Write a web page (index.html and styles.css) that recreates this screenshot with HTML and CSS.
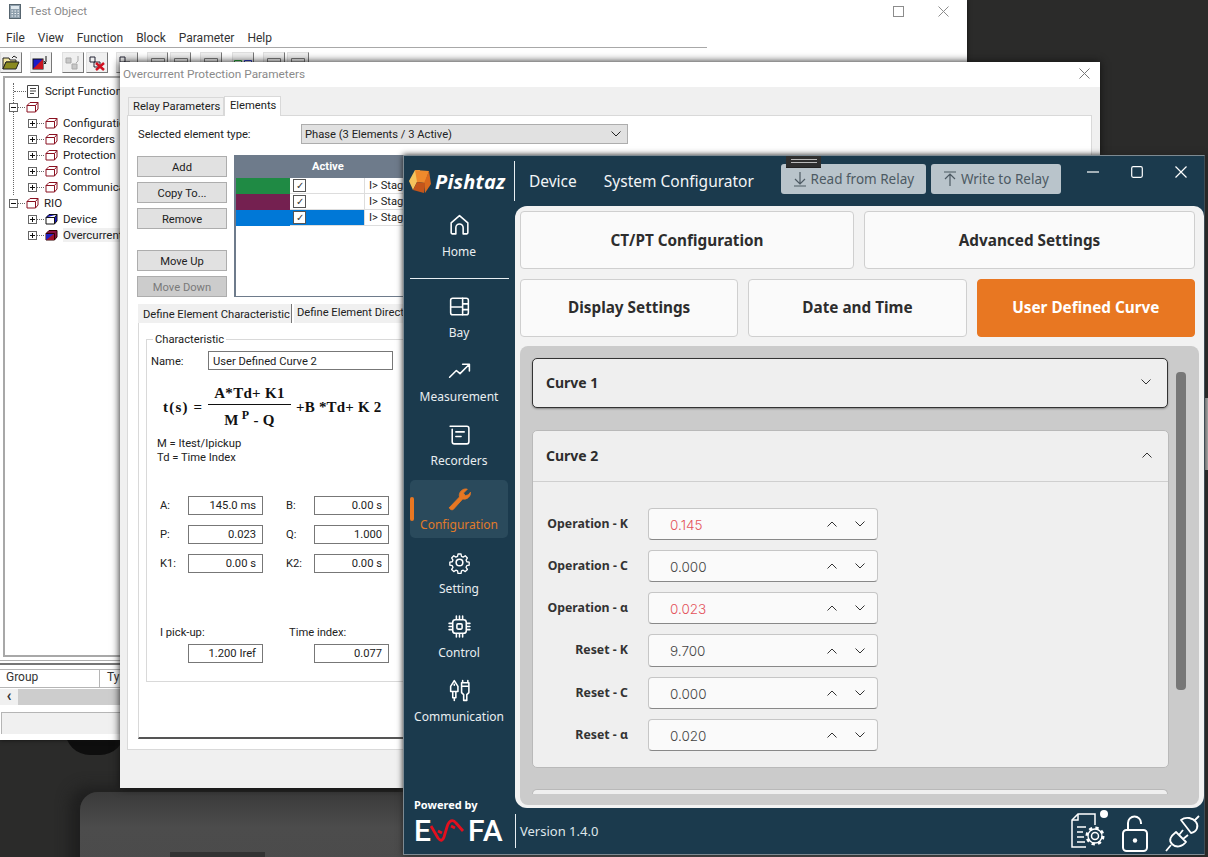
FILE: index.html
```html
<!DOCTYPE html>
<html lang="en">
<head>
<meta charset="utf-8">
<title>Pishtaz System Configurator</title>
<link rel="stylesheet" href="styles.css">
</head>
<body>
<svg class="sprite" xmlns="http://www.w3.org/2000/svg">
  <symbol id="cube" viewBox="0 0 13 12"><path d="M1 4.500h8.500v6.500H1zM1 4.500 4 1.500h8v6.500l-2.500 3M9.500 4.500 12 1.500" fill="none" stroke="#8a1020" stroke-width="1"/></symbol>
  <symbol id="cube-blue" viewBox="0 0 13 12"><path d="M1 4.500h8.500v6.500H1z" fill="#fff" stroke="#111"/><path d="M1 4.500 4 1.500h8v6.500l-2.500 3V4.500L12 1.500" fill="#1616c8" stroke="#111"/></symbol>
  <symbol id="cube-mix" viewBox="0 0 13 12"><path d="M1 4.500h8.500v6.500H1z" fill="#c81620" stroke="#300"/><path d="M1 11 9.500 4.500V11z" fill="#a01228"/><path d="M1 4.500h8.500L1 11z" fill="#2020c0"/><path d="M1 4.500 4 1.500h8v6.500l-2.500 3V4.500z" fill="#8a1040" stroke="#300"/></symbol>
  <symbol id="chev-down" viewBox="0 0 12 8"><path d="M1.500 1.500 6 6l4.500-4.500" fill="none" stroke="currentColor" stroke-width="1"/></symbol>
  <symbol id="chev-up" viewBox="0 0 12 8"><path d="M1.500 6.500 6 2l4.500 4.500" fill="none" stroke="currentColor" stroke-width="1"/></symbol>
  <symbol id="mini-box" viewBox="0 0 16 12"><path d="M1.500 1.500h13v9h-13zM1.500 5h13" fill="none" stroke="currentColor"/></symbol>
  <symbol id="pair-box" viewBox="0 0 20 12"><path d="M1.500 3.500h7v5h-7z" fill="none" stroke="#1fa030"/><path d="M11.500 3.500h7v5h-7z" fill="none" stroke="#2030c0"/></symbol>
</svg>

<div class="desktop">
  <div class="device-shape"></div>
  <div class="device-dark"></div>
  <div class="device-slot"></div>
  <div class="edge-strip"></div>

  <!-- Test Object window -->
  <section class="win win-test">
    <header class="test-title">
      <svg class="test-icon" width="12" height="15" viewBox="0 0 12 15"><rect x=".5" y=".5" width="11" height="14" fill="#8fa0ad" stroke="#56656f"/><rect x="2" y="2" width="8" height="3" fill="#dfe8ee"/><path d="M2.500 7h1.500M5.500 7H7M8.500 7H10M2.500 9.500h1.500M5.500 9.500H7M8.500 9.500H10M2.500 12h1.500M5.500 12H7M8.500 12H10" stroke="#eef3f6"/></svg>
      <span>Test Object</span>
      <span class="test-ctrls">
        <svg width="11" height="11" viewBox="0 0 11 11"><rect x=".5" y=".5" width="10" height="10" fill="none" stroke="#8c8c8c"/></svg>
        <svg width="11" height="11" viewBox="0 0 11 11"><path d="M.5.500l10 10M10.500.500l-10 10" stroke="#8c8c8c"/></svg>
      </span>
    </header>
    <nav class="test-menu"><span>File</span><span>View</span><span>Function</span><span>Block</span><span>Parameter</span><span>Help</span></nav>
    <div class="test-toolbar">
      <span class="tb"><svg width="18" height="15" viewBox="0 0 18 15"><path d="M1 3h6l1 2h6v2H4L1 14z" fill="#f2e6a0" stroke="#222"/><path d="M1 14 4 7h13l-3 7z" fill="#8a8a20" stroke="#222"/><path d="M10 3l2-2 3 2" fill="none" stroke="#222"/></svg></span>
      <span class="tb tb-m8"><svg width="18" height="15" viewBox="0 0 18 15"><rect x="1" y="4" width="10" height="10" fill="#1a1ac8" stroke="#111"/><path d="M1 14 11 4v10z" fill="#c81620"/><path d="M14 1v6l-2 2M12 6l2 3" fill="none" stroke="#111"/></svg></span>
      <span class="tb tb-m10"><svg width="18" height="15" viewBox="0 0 18 15"><path d="M2 3h5v5H2zM8 9h5v5H8z" fill="#c8c8c8" stroke="#aaa"/><path d="M14 1v5l-2 2" fill="none" stroke="#aaa"/></svg></span>
      <span class="tb tb-m2"><svg width="18" height="16" viewBox="0 0 18 16"><path d="M2 2h5v5H2zM6 7h6v5H6z" fill="none" stroke="#223"/><path d="M8 8l8 7M16 8l-8 7" stroke="#d01020" stroke-width="2.500"/></svg></span>
      <span class="tb tb-m8"><svg width="18" height="15" viewBox="0 0 18 15"><path d="M2 2h5v5H2zM6 7h6v5H6z" fill="none" stroke="#223"/></svg></span>
      <span class="tb tb-n tb-m9"><svg width="16" height="12"><use href="#mini-box"/></svg></span>
      <span class="tb tb-n tb-m2"><svg width="16" height="12"><use href="#mini-box"/></svg></span>
      <span class="tb tb-m9"><svg width="16" height="12"><use href="#mini-box"/></svg></span>
      <span class="tb tb-m10"><svg width="20" height="12"><use href="#pair-box"/></svg></span>
      <span class="tb tb-m9"><svg width="16" height="12"><use href="#mini-box"/></svg></span>
      <span class="tb tb-m2"><svg width="16" height="12"><use href="#mini-box"/></svg></span>
    </div>
    <div class="tree">
      <div class="tree-row tree-row-leaf"><span class="hdash"></span><svg class="doc" width="12" height="13" viewBox="0 0 12 13"><path d="M.5.500h11v12H.5zM3 3.500h6M3 6h6M3 8.500h4" fill="none" stroke="#444"/></svg><span class="tree-label">Script Functions</span></div>
      <div class="tree-row"><span class="expander minus"></span><span class="hdash short"></span><svg class="cube"><use href="#cube"/></svg></div>
      <div class="tree-row lvl2"><span class="expander plus"></span><span class="hdash short"></span><svg class="cube"><use href="#cube"/></svg><span class="tree-label">Configuration</span></div>
      <div class="tree-row lvl2"><span class="expander plus"></span><span class="hdash short"></span><svg class="cube"><use href="#cube"/></svg><span class="tree-label">Recorders</span></div>
      <div class="tree-row lvl2"><span class="expander plus"></span><span class="hdash short"></span><svg class="cube"><use href="#cube"/></svg><span class="tree-label">Protection</span></div>
      <div class="tree-row lvl2"><span class="expander plus"></span><span class="hdash short"></span><svg class="cube"><use href="#cube"/></svg><span class="tree-label">Control</span></div>
      <div class="tree-row lvl2"><span class="expander plus"></span><span class="hdash short"></span><svg class="cube"><use href="#cube"/></svg><span class="tree-label">Communication</span></div>
      <div class="tree-row"><span class="expander minus"></span><span class="hdash short"></span><svg class="cube"><use href="#cube"/></svg><span class="tree-label">RIO</span></div>
      <div class="tree-row lvl2"><span class="expander plus"></span><span class="hdash short"></span><svg class="cube"><use href="#cube-blue"/></svg><span class="tree-label">Device</span></div>
      <div class="tree-row lvl2"><span class="expander plus"></span><span class="hdash short"></span><svg class="cube"><use href="#cube-mix"/></svg><span class="tree-label tree-sel">Overcurrent</span></div>
    </div>
    <div class="test-split"></div>
    <div class="list-head"><span class="lh-group">Group</span><span class="lh-type">Type</span></div>
    <div class="test-scroll"><span class="scroll-arrow">‹</span><span class="scroll-thumb"></span></div>
    <div class="test-status"></div>
  </section>

  <!-- Overcurrent dialog -->
  <section class="win win-dialog">
    <header class="dlg-title"><span>Overcurrent Protection Parameters</span>
      <svg width="11" height="11" viewBox="0 0 11 11"><path d="M.5.500l10 10M10.500.500l-10 10" stroke="#777"/></svg>
    </header>
    <div class="dlg-body">
      <div class="tabs">
        <span class="tab">Relay Parameters</span><span class="tab tab-on">Elements</span>
      </div>
      <div class="dlg-panel">
        <div class="type-row">
          <span class="type-label">Selected element type:</span>
          <span class="select">Phase (3 Elements / 3 Active)<svg class="select-chev" width="12" height="8"><use href="#chev-down"/></svg></span>
        </div>
        <div class="elem-row">
          <div class="btn-col">
            <span class="btn">Add</span>
            <span class="btn">Copy To...</span>
            <span class="btn">Remove</span>
            <span class="btn btn-gap">Move Up</span>
            <span class="btn btn-off">Move Down</span>
          </div>
          <div class="elem-table">
            <div class="elem-head"><span>Active</span></div>
            <div class="elem-line"><span class="swatch sw-green"></span><span class="chk-cell"><span class="chk">✓</span></span><span class="stage">I&gt; Stage 1</span></div>
            <div class="elem-line"><span class="swatch sw-purple"></span><span class="chk-cell"><span class="chk">✓</span></span><span class="stage">I&gt; Stage 2</span></div>
            <div class="elem-line"><span class="swatch sw-blue"></span><span class="chk-cell chk-sel"><span class="chk">✓</span></span><span class="stage">I&gt; Stage 3</span></div>
          </div>
        </div>
        <div class="sub-tabs"><span class="sub-tab sub-on">Define Element Characteristic</span><span class="sub-tab">Define Element Direction</span></div>
        <div class="sub-panel">
          <div class="group">
            <span class="legend">Characteristic</span>
            <div class="name-row"><span class="name-label">Name:</span><span class="inp inp-name">User Defined Curve 2</span></div>
            <div class="formula">
              <span class="f-lhs">t(s) =</span>
              <span class="frac"><span class="f-num">A*Td+ K1</span><span class="f-den">M<sup>P</sup> - Q</span></span>
              <span class="f-rhs">+B *Td+ K 2</span>
            </div>
            <p class="legend-note">M = Itest/Ipickup<br>Td = Time Index</p>
            <div class="param-grid">
              <span>A:</span><span class="inp">145.0 ms</span><span></span><span>B:</span><span class="inp">0.00 s</span>
              <span>P:</span><span class="inp">0.023</span><span></span><span>Q:</span><span class="inp">1.000</span>
              <span>K1:</span><span class="inp">0.00 s</span><span></span><span>K2:</span><span class="inp">0.00 s</span>
            </div>
            <div class="pick-grid">
              <span class="pick-l">I pick-up:</span><span class="pick-r">Time index:</span>
              <span class="inp pick-i1">1.200 Iref</span><span class="inp pick-i2">0.077</span>
            </div>
          </div>
        </div>
      </div>
    </div>
  </section>

  <!-- Pishtaz app -->
  <section class="win win-app">
    <header class="app-head">
      <div class="brand">
        <svg width="26" height="26" viewBox="0 0 26 26"><path d="M8 2 2 13l4 9 4-8 3-12z" fill="#f5c35c"/><path d="M8 2l14 1-4 12-8-1z" fill="#ee8a2c"/><path d="M22 3l2 13-6 9-1-10z" fill="#d96a1e"/><path d="M10 14l8 1-1 10-11-3z" fill="#c4551a"/></svg>
        <span class="brand-name">Pishtaz</span>
      </div>
      <span class="head-title">Device</span>
      <span class="head-title head-title-2">System Configurator</span>
      <button class="head-btn head-btn-read"><svg width="14" height="16" viewBox="0 0 14 16"><path d="M7 1v12M2 8l5 5 5-5M1 15h12" fill="none" stroke="currentColor" stroke-width="1.200"/></svg>Read from Relay</button>
      <button class="head-btn head-btn-write"><svg width="14" height="16" viewBox="0 0 14 16"><path d="M7 15V3M2 8l5-5 5 5M1 1h12" fill="none" stroke="currentColor" stroke-width="1.200"/></svg>Write to Relay</button>
      <div class="win-ctrls">
        <svg width="12" height="12" viewBox="0 0 12 12"><path d="M0 6h12" stroke="#fff" stroke-width="1.200"/></svg>
        <svg width="12" height="12" viewBox="0 0 12 12"><rect x=".7" y=".7" width="10.600" height="10.600" rx="1.500" fill="none" stroke="#fff" stroke-width="1.200"/></svg>
        <svg width="12" height="12" viewBox="0 0 12 12"><path d="M.5.500l11 11M11.500.500l-11 11" stroke="#fff" stroke-width="1.200"/></svg>
      </div>
      <span class="snip-tag"></span>
    </header>
    <div class="app-body">
      <aside class="side">
        <nav class="side-nav">
          <a class="nav-item nav-home"><svg viewBox="0 0 24 24"><path d="M4 10.500 12 3.500l8 7V20a1 1 0 0 1-1 1h-3.500v-6a3.500 3.500 0 0 0-7 0v6H5a1 1 0 0 1-1-1z"/></svg><span>Home</span></a>
          <span class="nav-rule"></span>
          <a class="nav-item"><svg viewBox="0 0 24 24"><rect x="3.500" y="4" width="17" height="16" rx="2"/><path d="M15 4v16M3.500 12.500H15M15 9.500h5.500M15 15h5.500"/></svg><span>Bay</span></a>
          <a class="nav-item"><svg viewBox="0 0 24 24"><path d="M2.500 18.500 9 12l3.500 3L21 6.500M15 6h6.500v6.500"/></svg><span>Measurement</span></a>
          <a class="nav-item"><svg viewBox="0 0 24 24"><path d="M6 4h13a2 2 0 0 1 2 2v13a2 2 0 0 1-2 2H7a2 2 0 0 1-2-2V7M3 4h4M8.500 9.500h8M8.500 14h5"/></svg><span>Recorders</span></a>
          <a class="nav-item nav-on"><svg viewBox="0 0 24 24"><path class="wrench" d="M2.500 20.500 12 10.500c-.8-3 .8-6.500 4.500-7.500 1.300-.3 2.300-.2 3 .1L15.800 6.800l1.700 2.500 3-.8 2-2.500c.4 3.800-3 7.300-7.500 6.500L6 22.500c-1.500 1-4.300-.5-3.500-2z"/></svg><span>Configuration</span></a>
          <a class="nav-item"><svg viewBox="0 0 24 24"><circle cx="12" cy="12" r="3.200"/><path d="M10.300 2.500h3.400l.5 2.700 1.900.8 2.300-1.500 2.400 2.400-1.500 2.300.8 1.900 2.700.5v3.400l-2.700.5-.8 1.900 1.500 2.300-2.400 2.400-2.300-1.500-1.900.8-.5 2.700h-3.400l-.5-2.700-1.900-.8-2.300 1.500-2.400-2.400 1.500-2.300-.8-1.900-2.700-.5v-3.400l2.700-.5.8-1.900-1.500-2.300 2.400-2.400 2.300 1.500 1.900-.8z" transform="translate(1.700 1.700) scale(.86)"/></svg><span>Setting</span></a>
          <a class="nav-item"><svg viewBox="0 0 24 24"><rect x="5.500" y="5.500" width="13" height="13" rx="2.500"/><rect x="9.500" y="9.500" width="5" height="5" rx="1"/><path d="M9 2v3M12 2v3M15 2v3M9 19v3M12 19v3M15 19v3M2 9h3M2 12h3M2 15h3M19 9h3M19 12h3M19 15h3"/></svg><span>Control</span></a>
          <a class="nav-item"><svg viewBox="0 0 24 24"><path d="M7 2.500 3.500 8v5h7V8zM5.500 13v6h3v-6M7 19v2.500M7 6v1M14 8V4.500h7V8zM15 4V2.500M20 4V2.500M14 8v6l2 2v5.500h3V16l2-2V8z"/></svg><span>Communication</span></a>
        </nav>
        <div class="powered">
          <span class="powered-by">Powered by</span>
          <div class="evafa"><span>E</span><svg width="36" height="26" viewBox="0 0 36 26"><path d="M2 8l7 12c3 4 5 2 6-1l3-10c2-7 6-8 9-4l7 8M13 15l-4-2m13-5 4 2" fill="none" stroke="#e3101f" stroke-width="2.800"/></svg><span>FA</span></div>
        </div>
      </aside>
      <div class="app-main">
        <main class="content">
          <div class="card-row">
            <button class="card card-wide">CT/PT Configuration</button>
            <button class="card card-wide-2">Advanced Settings</button>
          </div>
          <div class="card-row card-row-2">
            <button class="card">Display Settings</button>
            <button class="card">Date and Time</button>
            <button class="card card-on">User Defined Curve</button>
          </div>
          <div class="curves">
            <div class="acc acc-focus"><div class="acc-head"><span>Curve 1</span><svg class="acc-chev" width="12" height="8"><use href="#chev-down"/></svg></div></div>
            <div class="acc acc-open">
              <div class="acc-head acc-head-open"><span>Curve 2</span><svg class="acc-chev" width="12" height="8"><use href="#chev-up"/></svg></div>
              <div class="fields">
                <div class="field"><label>Operation - K</label><div class="spin"><span class="val val-red">0.145</span><svg width="12" height="8"><use href="#chev-up"/></svg><svg width="12" height="8"><use href="#chev-down"/></svg></div></div>
                <div class="field"><label>Operation - C</label><div class="spin"><span class="val">0.000</span><svg width="12" height="8"><use href="#chev-up"/></svg><svg width="12" height="8"><use href="#chev-down"/></svg></div></div>
                <div class="field"><label>Operation - α</label><div class="spin"><span class="val val-red">0.023</span><svg width="12" height="8"><use href="#chev-up"/></svg><svg width="12" height="8"><use href="#chev-down"/></svg></div></div>
                <div class="field field-tall"><label>Reset - K</label><div class="spin"><span class="val">9.700</span><svg width="12" height="8"><use href="#chev-up"/></svg><svg width="12" height="8"><use href="#chev-down"/></svg></div></div>
                <div class="field"><label>Reset - C</label><div class="spin"><span class="val">0.000</span><svg width="12" height="8"><use href="#chev-up"/></svg><svg width="12" height="8"><use href="#chev-down"/></svg></div></div>
                <div class="field"><label>Reset - α</label><div class="spin"><span class="val">0.020</span><svg width="12" height="8"><use href="#chev-up"/></svg><svg width="12" height="8"><use href="#chev-down"/></svg></div></div>
              </div>
            </div>
            <div class="acc acc-next"></div>
            <span class="scrollbar"></span>
          </div>
        </main>
        <footer class="status">
          <span class="version">Version 1.4.0</span>
          <svg class="st-doc" width="38" height="38" viewBox="0 0 38 38"><path d="M17 35H3V8l6-6h17v11" fill="none" stroke="#fff" stroke-width="1.500"/><path d="M3 8h6V2M8 15h9M8 20h6M8 25h7M8 30h8" fill="none" stroke="#fff" stroke-width="1.500"/><circle cx="26" cy="24" r="3.500" fill="none" stroke="#fff" stroke-width="1.500"/><circle cx="26" cy="24" r="8" fill="none" stroke="#fff" stroke-width="3" stroke-dasharray="3.200 3.100"/><circle cx="26" cy="24" r="7" fill="none" stroke="#fff" stroke-width="1.300"/></svg>
          <span class="st-dot"></span>
          <svg class="st-lock" width="28" height="38" viewBox="0 0 28 38"><rect x="2" y="15" width="24" height="21" rx="3.500" fill="none" stroke="#fff" stroke-width="2"/><path d="M7 15V8a6.500 6.500 0 0 1 13 0v1" fill="none" stroke="#fff" stroke-width="2"/><circle cx="14" cy="25.500" r="2.200" fill="#fff"/></svg>
          <svg class="st-plug" width="36" height="38" viewBox="0 0 36 38"><path d="M16 5 26 18C32 17 34 11 31 7 28 3 21 1 16 5zM30 5l4-4M11 17 21 27C17 32 11 33 7 29 3 25 6 21 11 17zM14 20l4-5M18 24l5-4M6 30l-5 6" fill="none" stroke="#fff" stroke-width="1.800" stroke-linejoin="round"/></svg>
        </footer>
      </div>
    </div>
  </section>
</div>
</body>
</html>
```
FILE: styles.css
```css
* { box-sizing: border-box; }
html, body { margin: 0; padding: 0; }
body { background: #2b2b2a; overflow: hidden; font-family: "Noto Sans", "Liberation Sans", sans-serif; }
.sprite { display: none; }
.desktop { position: relative; width: 1208px; height: 857px; overflow: hidden; background: #2b2b2a; }
.device-shape { position: absolute; left: 80px; top: 792px; width: 1000px; height: 120px; border-radius: 18px 0 0 0; background: linear-gradient(#3a3a3a, #4c4c4c 30%, #4a4a4a); box-shadow: -10px -5px 14px #1f1f1f; }
.device-dark { position: absolute; left: 65px; top: 730px; width: 60px; height: 25px; border-radius: 0 0 30px 30px; background: #0e0e0e; }
.device-slot { position: absolute; left: 170px; top: 852px; width: 95px; height: 5px; background: #333; }
.edge-strip { position: absolute; left: 1205px; top: 398px; width: 3px; height: 72px; background: #bdbdbd; }
.win { position: absolute; }

/* Test Object */
.win-test { left: 0; top: 0; width: 967px; height: 740px; background: #fff; display: flex; flex-direction: column; color: #222; font-family: Roboto, sans-serif; font-size: 12px; box-shadow: 0 0 4px #111; }
.test-title { height: 24px; display: flex; align-items: center; padding: 0 0 2px 9px; gap: 8px; color: #8a8a8a; font-size: 11.500px; }
.test-ctrls { margin-left: auto; margin-right: 18px; display: flex; gap: 34px; }
.test-menu { height: 23px; display: flex; gap: 13px; padding: 4px 0 0 6px; align-items: center; font-size: 12px; color: #333; }
.test-toolbar { width: 707px; height: 29px; border-top: 1px solid #a8a8a8; display: flex; padding-top: 4px; }
.tb { width: 22px; height: 21px; background: #f0f0f0; border: 1px solid #e0e0e0; border-right-color: #777; border-bottom-color: #777; display: flex; align-items: center; justify-content: center; flex: none; color: #777; }
.tb-n { width: 21px; }
.tb-m2 { margin-left: 2px; }
.tb-m8 { margin-left: 8px; }
.tb-m9 { margin-left: 9px; }
.tb-m10 { margin-left: 10px; }
.tree { position: relative; height: 581px; margin-left: 3px; border: 2px solid #a8a8a8; border-right: 0; padding-top: 5px; overflow: hidden; }
.tree::before { content: ""; position: absolute; left: 8px; top: 5px; height: 112px; border-left: 1px dotted #666; }
.tree-row { height: 16px; display: flex; align-items: center; padding-left: 4px; white-space: nowrap; font-size: 11.500px; color: #222; }
.tree-row-leaf { padding-left: 9px; }
.hdash { width: 12px; border-top: 1px dotted #666; margin-right: 1px; flex: none; }
.hdash.short { width: 7px; margin-right: 1px; }
.doc { flex: none; margin-right: 6px; }
.cube { width: 13px; height: 12px; flex: none; margin-right: 5px; }
.lvl2 { padding-left: 23px; }
.expander { width: 9px; height: 9px; border: 1px solid #666; background: #fff; flex: none; position: relative; z-index: 1; background-image: linear-gradient(#111, #111); background-size: 5px 1px; background-repeat: no-repeat; background-position: center; }
.expander.plus { background-image: linear-gradient(#111, #111), linear-gradient(#111, #111); background-size: 5px 1px, 1px 5px; }
.tree-sel { background: #f0f0f0; }
.test-split { height: 5px; margin-top: 3px; border-top: 1px solid #b0b0b0; border-bottom: 2px solid #777; }
.list-head { height: 19px; margin-top: 4px; display: flex; font-size: 12px; color: #333; }
.lh-group { width: 100px; padding-left: 6px; border: 1px solid #b5b5b5; border-left: 0; }
.lh-type { padding-left: 7px; flex: 1; border-bottom: 1px solid #b5b5b5; border-top: 1px solid #b5b5b5; }
.test-scroll { height: 16px; margin-top: 1px; display: flex; background: #f0f0f0; }
.scroll-arrow { width: 18px; text-align: center; font-size: 16px; line-height: 13px; font-weight: 700; color: #333; }
.scroll-thumb { flex: 1; background: #cdcdcd; }
.test-status { height: 22px; margin: 7px 0 0 1px; background: #f0f0f0; border: 1px solid #b5b5b5; border-right: 0; border-bottom: 0; }

/* Dialog */
.win-dialog { left: 120px; top: 62px; width: 980px; height: 726px; background: #f0f0f0; display: flex; flex-direction: column; color: #222; font-family: Roboto, sans-serif; font-size: 11.200px; box-shadow: 0 0 8px #111; }
.dlg-title { height: 25px; background: #fff; display: flex; align-items: center; justify-content: space-between; padding: 0 10px 2px 3px; color: #8a8a8a; font-size: 11.800px; flex: none; }
.dlg-body { padding: 8px 8px 0 7px; }
.tabs { display: flex; height: 20px; align-items: flex-end; padding-left: 1px; }
.tab { height: 18px; padding: 0 4px; line-height: 17px; background: #f0f0f0; border: 1px solid #d9d9d9; border-bottom: 0; width: 96px; white-space: nowrap; }
.tab-on { height: 20px; width: 57px; background: #fff; line-height: 17px; padding: 0 5px; margin-bottom: -1px; position: relative; }
.dlg-panel { width: 965px; height: 635px; background: #fff; border: 1px solid #d9d9d9; }
.type-row { display: flex; height: 20px; margin-top: 8px; padding-left: 10px; align-items: center; }
.type-label { width: 163px; }
.select { position: relative; width: 327px; height: 20px; line-height: 19px; padding-left: 3px; background: #e1e1e1; border: 1px solid #adadad; }
.select-chev { position: absolute; right: 5px; top: 5px; color: #222; }
.elem-row { display: flex; margin-top: 11px; height: 142px; padding-left: 9px; gap: 7px; }
.btn-col { width: 90px; display: flex; flex-direction: column; gap: 5px; flex: none; margin-top: 1px; }
.btn { height: 21px; line-height: 21px; text-align: center; background: #e1e1e1; border: 1px solid #adadad; }
.btn-gap { margin-top: 16px; }
.btn-off { background: #cccccc; color: #7a7a7a; }
.elem-table { width: 850px; border: 2px solid #6e7b8b; border-top: 0; border-right: 0; border-bottom-width: 1px; background: #fff; }
.elem-head { height: 23px; background: #6e7b8b; color: #fff; font-weight: 700; padding-left: 76px; line-height: 23px; font-size: 11.200px; }
.elem-line { height: 16px; display: flex; }
.swatch { width: 54px; flex: none; }
.sw-green { background: #1f8a44; }
.sw-purple { background: #742050; }
.sw-blue { background: #0078d7; }
.chk-cell { width: 75px; padding-left: 3px; display: flex; align-items: center; border-bottom: 1px solid #ddd; border-right: 1px solid #ddd; }
.chk-sel { background: #0078d7; }
.chk { width: 13px; height: 13px; border: 1px solid #555; background: #fff; font-size: 10px; line-height: 11px; text-align: center; color: #333; }
.stage { padding-left: 4px; line-height: 16px; white-space: nowrap; border-bottom: 1px solid #ddd; flex: 1; }
.sub-tabs { display: flex; margin: 7px 0 0 10px; height: 19px; }
.sub-tab { padding: 0 3px; line-height: 17px; background: #f0f0f0; white-space: nowrap; }
.sub-on { width: 154px; line-height: 21px; padding: 0 5px; border-right: 1px solid #777; margin-right: 2px; }
.sub-panel { width: 947px; height: 416px; margin-left: 10px; border-left: 1px solid #d9d9d9; border-bottom: 2px solid #555; padding: 16px 7px 0 7px; }
.group { position: relative; height: 343px; border: 1px solid #d9d9d9; }
.legend { position: absolute; left: 6px; top: -7px; background: #fff; padding: 0 2px; line-height: 13px; }
.name-row { display: flex; align-items: center; margin: 11px 0 0 4px; }
.name-label { width: 57px; padding-top: 1px; }
.inp { height: 19px; border: 1px solid #777; line-height: 18px; padding: 0 6px; text-align: right; background: #fff; white-space: nowrap; }
.inp-name { width: 185px; text-align: left; padding: 0 4px; line-height: 19px; }
.formula { display: flex; align-items: center; height: 45px; margin: 15px 0 0 16px; font: 700 15px "Liberation Serif", serif; color: #111; white-space: nowrap; letter-spacing: .3px; }
.f-lhs { width: 45px; letter-spacing: 1.200px; }
.frac { display: flex; flex-direction: column; width: 83px; align-items: center; }
.f-num { border-bottom: 1px solid #111; width: 100%; text-align: center; line-height: 22px; }
.f-den { line-height: 26px; font-size: 15px; padding-top: 2px; }
.f-den sup { font-size: 12px; line-height: 0; vertical-align: 6px; margin-left: 3px; }
.f-rhs { margin-left: 5px; letter-spacing: .2px; }
.legend-note { margin: 7px 0 0 10px; line-height: 14px; }
.param-grid { display: grid; grid-template-columns: 28px 75px 23px 28px 75px; grid-auto-rows: 19px; row-gap: 10px; margin: 31px 0 0 13px; align-items: center; line-height: 19px; }
.pick-grid { display: grid; grid-template-columns: 28px 75px 23px 28px 75px; margin: 51px 0 0 13px; align-items: center; }
.pick-l { grid-column: 1 / 3; grid-row: 1; height: 20px; line-height: 17px; }
.pick-r { grid-column: 4 / 6; grid-row: 1; height: 20px; padding-left: 3px; line-height: 17px; }
.pick-i1 { grid-column: 2; grid-row: 2; }
.pick-i2 { grid-column: 5; grid-row: 2; }

/* App */
.win-app { left: 403px; top: 155px; width: 802px; height: 700px; background: #1b3a4d; border: 1px solid #7d8a92; border-right-color: #3e4c55; display: flex; flex-direction: column; color: #fff; font-family: "Noto Sans", sans-serif; box-shadow: 0 0 6px #222; }
.app-head { position: relative; height: 50px; flex: none; display: flex; align-items: flex-start; }
.brand { width: 111px; height: 40px; margin-top: 5px; border-right: 1px solid #e8eef2; display: flex; align-items: center; padding-left: 3px; gap: 2px; }
.brand-name { font: italic 700 20px "Open Sans", sans-serif; letter-spacing: .2px; }
.head-title { margin: 14px 0 0 14px; font-size: 15.500px; line-height: 22px; color: #f2f5f7; }
.head-title-2 { margin-left: 27px; }
.head-btn { display: flex; align-items: center; justify-content: center; gap: 4px; height: 30px; margin-top: 8px; border: 0; border-radius: 3px; background: #b9c4cb; color: #4d5a63; font: 13.500px "Noto Sans", sans-serif; padding: 0 0 1px; }
.head-btn-read { width: 145px; margin-left: 27px; }
.head-btn-write { width: 130px; margin-left: 5px; }
.win-ctrls { display: flex; gap: 32px; margin: 10px 0 0 26px; }
.snip-tag { position: absolute; left: 382px; top: 0; width: 35px; height: 12px; background: #2f2f2f; border-bottom: 1px solid #222; background-image: linear-gradient(#bbb, #bbb), linear-gradient(#bbb, #bbb); background-size: 26px 1px; background-repeat: no-repeat; background-position: center 3px, center 6px; }
.app-body { flex: 1; display: flex; min-height: 0; }
.side { width: 111px; flex: none; display: flex; flex-direction: column; }
.side-nav { display: flex; flex-direction: column; gap: 6px; padding: 0 7px 0 6px; }
.nav-item { height: 58px; display: flex; flex-direction: column; align-items: center; font-size: 12px; color: #e9eef1; border-radius: 5px; position: relative; }
.nav-item svg { width: 25px; height: 25px; margin-top: 6px; fill: none; stroke: #fff; stroke-width: 1.500; stroke-linecap: round; stroke-linejoin: round; flex: none; }
.nav-item span { margin-top: 4px; line-height: 20px; white-space: nowrap; }
.nav-home span { margin-top: 5px; }
.nav-rule { height: 1px; background: #e8eef2; margin: 8px -1px 3px 0; }
.nav-on { background: #2a4a5c; color: #e07a2a; }
.nav-on::before { content: ""; position: absolute; left: 0; top: 17px; width: 4px; height: 24px; border-radius: 2px; background: #e87722; }
.nav-on .wrench { fill: #e87722; stroke: #e87722; stroke-width: .8; }
.powered { margin-top: auto; padding: 0 0 9px 10px; }
.powered-by { display: block; font-size: 11px; font-weight: 700; line-height: 14px; }
.evafa { display: flex; align-items: center; height: 28px; margin-top: 5px; font: 500 30px Roboto, sans-serif; line-height: 28px; letter-spacing: 1px; }
.evafa svg { margin: 0 3px 0 -3px; }
.app-main { flex: 1; display: flex; flex-direction: column; min-width: 0; }
.content { height: 602px; flex: none; background: #f2f2f2; border-radius: 12px 10px 12px 12px; padding: 5px 9px 3px 5px; }
.card-row { display: flex; gap: 10px; height: 58px; }
.card-row-2 { margin-top: 10px; }
.card { flex: 1; background: #fafafa; border: 1px solid #cfcfcf; border-radius: 4px; color: #2d2d2d; font: 700 15.300px "Noto Sans", sans-serif; padding: 0 0 2px; }
.card-wide { flex: none; width: 334px; padding: 0; }
.card-wide-2 { flex: none; width: 331px; padding: 0; }
.card-on { background: #e87722; border-color: #e87722; color: #fff; }
.curves { position: relative; height: 459px; margin: 9px -4px 0 0; background: #cbcbcb; border-radius: 8px; padding: 12px 0 0 12px; overflow: hidden; }
.acc { width: 637px; background: #efefef; border: 1px solid #b9b9b9; border-radius: 5px; color: #2d2d2d; }
.acc-focus { width: 636px; height: 50px; border-color: #333; box-shadow: 0 1px 2px #888; }
.acc-open { height: 338px; margin-top: 22px; }
.acc-next { width: 636px; height: 5px; margin-top: 21px; border-bottom: 0; border-radius: 5px 5px 0 0; }
.acc-head { height: 48px; display: flex; align-items: center; justify-content: space-between; padding: 0 15px 2px 13px; font-size: 14px; font-weight: 700; }
.acc-head-open { height: 51px; border-bottom: 1px solid #cfcfcf; }
.acc-chev { color: #333; }
.fields { display: flex; flex-direction: column; gap: 10px; padding-top: 26px; }
.field { display: flex; height: 32px; align-items: center; gap: 20px; }
.field-tall { height: 33px; }
.field label { width: 95px; text-align: right; font-size: 12.300px; font-weight: 700; color: #333; white-space: nowrap; padding-bottom: 2px; }
.spin { width: 230px; height: 100%; display: flex; align-items: center; background: #fafafa; border: 1px solid #c6c6c6; border-bottom-color: #888; border-radius: 4px; color: #333; padding: 0 11px 0 21px; gap: 16px; }
.val { flex: 1; font-size: 13.500px; font-weight: 300; line-height: 20px; padding-top: 1px; color: #444; font-family: Inter, sans-serif; }
.val-red { color: #e4525a; }
.scrollbar { position: absolute; left: 656px; top: 26px; width: 10px; height: 318px; border-radius: 4px; background: #777; }
.status { position: relative; flex: 1; display: flex; align-items: center; padding-left: 5px; }
.status::before { content: ""; position: absolute; left: 0; top: 6px; height: 34px; width: 1px; background: #e8eef2; }
.version { font-size: 13px; color: #dfe6ea; }
.st-doc { position: absolute; left: 554px; top: 4px; }
.st-dot { position: absolute; left: 585px; top: 2px; width: 8px; height: 8px; border-radius: 50%; background: #fff; }
.st-lock { position: absolute; left: 606px; top: 7px; }
.st-plug { position: absolute; left: 650px; top: 7px; }
```
